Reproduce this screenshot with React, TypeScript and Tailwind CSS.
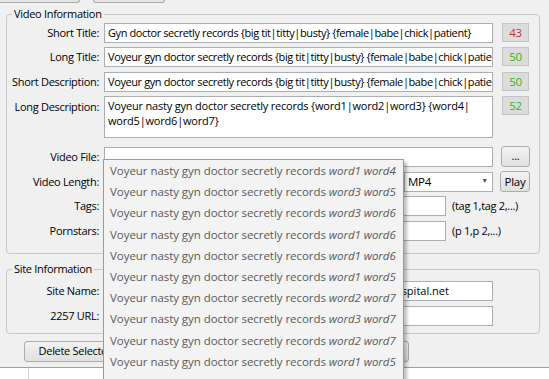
import React from 'react';

const suggestions = [
  ['word1', 'word4'],
  ['word3', 'word5'],
  ['word3', 'word6'],
  ['word1', 'word6'],
  ['word1', 'word6'],
  ['word1', 'word5'],
  ['word2', 'word7'],
  ['word3', 'word7'],
  ['word2', 'word7'],
  ['word1', 'word5'],
];

const field =
  'shrink-0 h-[20px] border border-[#abadb3] bg-white px-[3px] leading-[18px] text-black whitespace-nowrap overflow-hidden';
const btn =
  'shrink-0 border border-[#acacac] rounded-[3px] bg-gradient-to-b from-[#f2f2f2] to-[#e0e0e0] text-black flex items-center justify-center whitespace-nowrap';

function Label({ children, top = false }: { children: React.ReactNode; top?: boolean }) {
  return (
    <div
      className={`w-[93px] shrink-0 text-right pr-[1px] whitespace-nowrap ${
        top ? 'pt-[3px]' : 'leading-[20px]'
      }`}
    >
      {children}
    </div>
  );
}

function Count({ value, red }: { value: string; red?: boolean }) {
  return (
    <div
      className={`shrink-0 ml-[9px] w-[27px] h-[19px] border border-[#c4c4c4] bg-[#dcdcdc] text-center leading-[17px] text-[11.5px] ${
        red ? 'text-[#c8323c]' : 'text-[#2fb52f]'
      }`}
    >
      {value}
    </div>
  );
}

export default function App() {
  return (
    <div className="relative w-[549px] h-[379px] overflow-hidden bg-[#f0f0f0] text-[11px] tracking-[-0.3px] text-black font-['Open_Sans',sans-serif]">
      {/* cut-off toolbar buttons */}
      <div className="flex h-[3px]">
        <div className="w-[80px] border-b border-r border-[#acacac] rounded-br-[3px] bg-[#e4e4e4]" />
        <div className="ml-[13px] w-[72px] border-b border-x border-[#acacac] rounded-b-[3px] bg-[#e4e4e4]" />
      </div>

      <fieldset className="mt-[4px] ml-[6px] w-[534px] h-[247px] border border-[#c8c8c8] rounded-[4px] pt-[2px]">
        <legend className="ml-[5px] px-[2px] leading-[14px]">Video Information</legend>

        <div className="flex items-start">
          <Label>Short Title:</Label>
          <div className={`ml-[4px] w-[389px] tracking-[-0.4px] ${field}`}>
            Gyn doctor secretly records {'{big tit|titty|busty}'} {'{female|babe|chick|patient}'}
          </div>
          <Count value="43" red />
        </div>

        <div className="flex items-start mt-[4px]">
          <Label>Long Title:</Label>
          <div className={`ml-[4px] w-[389px] tracking-[-0.4px] ${field}`}>
            Voyeur gyn doctor secretly records {'{big tit|titty|busty}'} {'{female|babe|chick|patient}'}
          </div>
          <Count value="50" />
        </div>

        <div className="flex items-start mt-[5px]">
          <Label>Short Description:</Label>
          <div className={`ml-[4px] w-[389px] tracking-[-0.4px] ${field}`}>
            Voyeur gyn doctor secretly records {'{big tit|titty|busty}'} {'{female|babe|chick|patient}'}
          </div>
          <Count value="50" />
        </div>

        <div className="flex items-start mt-[4px]">
          <Label top>Long Description:</Label>
          <div className="shrink-0 ml-[4px] w-[389px] h-[42px] border border-[#abadb3] bg-white px-[3px] pt-[1px] leading-[15px] tracking-[-0.2px]">
            Voyeur nasty gyn doctor secretly records {'{word1|word2|word3}'} {'{word4|'}
            <br />
            {'word5|word6|word7}'}
          </div>
          <Count value="52" />
        </div>

        <div className="flex items-center mt-[8px]">
          <Label>Video File:</Label>
          <div className={`ml-[4px] w-[389px] ${field}`} />
          <div className={`ml-[8px] w-[29px] h-[21px] ${btn}`}>...</div>
        </div>

        <div className="flex items-center mt-[4px]">
          <Label>Video Length:</Label>
          <div className={`ml-[4px] w-[294px] ${field}`} />
          <div className="shrink-0 ml-[6px] w-[89px] h-[20px] border border-[#abadb3] bg-white flex items-center">
            <span className="flex-1 pl-[3px] text-[11.5px]">MP4</span>
            <span className="w-[15px] text-center text-[7px] text-[#555]">▼</span>
          </div>
          <div className={`ml-[7px] w-[30px] h-[21px] text-[11.5px] ${btn}`}>Play</div>
        </div>

        <div className="flex items-center mt-[4px]">
          <Label>Tags:</Label>
          <div className={`ml-[4px] w-[342px] ${field}`} />
          <span className="ml-[6px] whitespace-nowrap">(tag 1,tag 2,...)</span>
        </div>

        <div className="flex items-center mt-[5px]">
          <Label>Pornstars:</Label>
          <div className={`ml-[4px] w-[342px] ${field}`} />
          <span className="ml-[6px] whitespace-nowrap">(p 1,p 2,...)</span>
        </div>
      </fieldset>

      <fieldset className="mt-[8px] ml-[6px] w-[534px] h-[72px] border border-[#c8c8c8] rounded-[4px] pt-[5px]">
        <legend className="ml-[5px] px-[2px] leading-[14px]">Site Information</legend>

        <div className="flex items-center">
          <Label>Site Name:</Label>
          <div className={`ml-[4px] w-[389px] tracking-normal ${field}`}>
            http://www.nasty-gyn-doctor-secretly-records-voyeurs-hospital.net
          </div>
        </div>

        <div className="flex items-center mt-[5px]">
          <Label>2257 URL:</Label>
          <div className={`ml-[4px] w-[389px] ${field}`} />
        </div>
      </fieldset>

      <div className="flex mt-[7px] h-[21px]">
        <div className={`ml-[24px] w-[104px] ${btn}`}>Delete Selected</div>
        <div className={`ml-[172px] w-[109px] ${btn}`}>Delete All</div>
      </div>

      {/* grid below */}
      <div className="mt-[5px] h-[20px] border-t border-[#a0a0a0] bg-white flex">
        <div className="w-[29px] border-r border-[#d0d0d0]" />
      </div>

      {/* autocomplete popup */}
      <div className="absolute left-[103px] top-[159px] w-[301px] h-[240px] border border-[#9a9a9a] bg-[#f3f3f3] text-[#5a5a5a] shadow-[3px_3px_3px_rgba(0,0,0,0.25)] text-[11.5px] tracking-[-0.05px]">
        {suggestions.map(([a, b], i) => (
          <div key={i} className="h-[21.2px] leading-[21px] pl-[6px] whitespace-nowrap">
            Voyeur nasty gyn doctor secretly records{' '}
            <span className="italic">
              {a} {b}
            </span>
          </div>
        ))}
      </div>
    </div>
  );
}
